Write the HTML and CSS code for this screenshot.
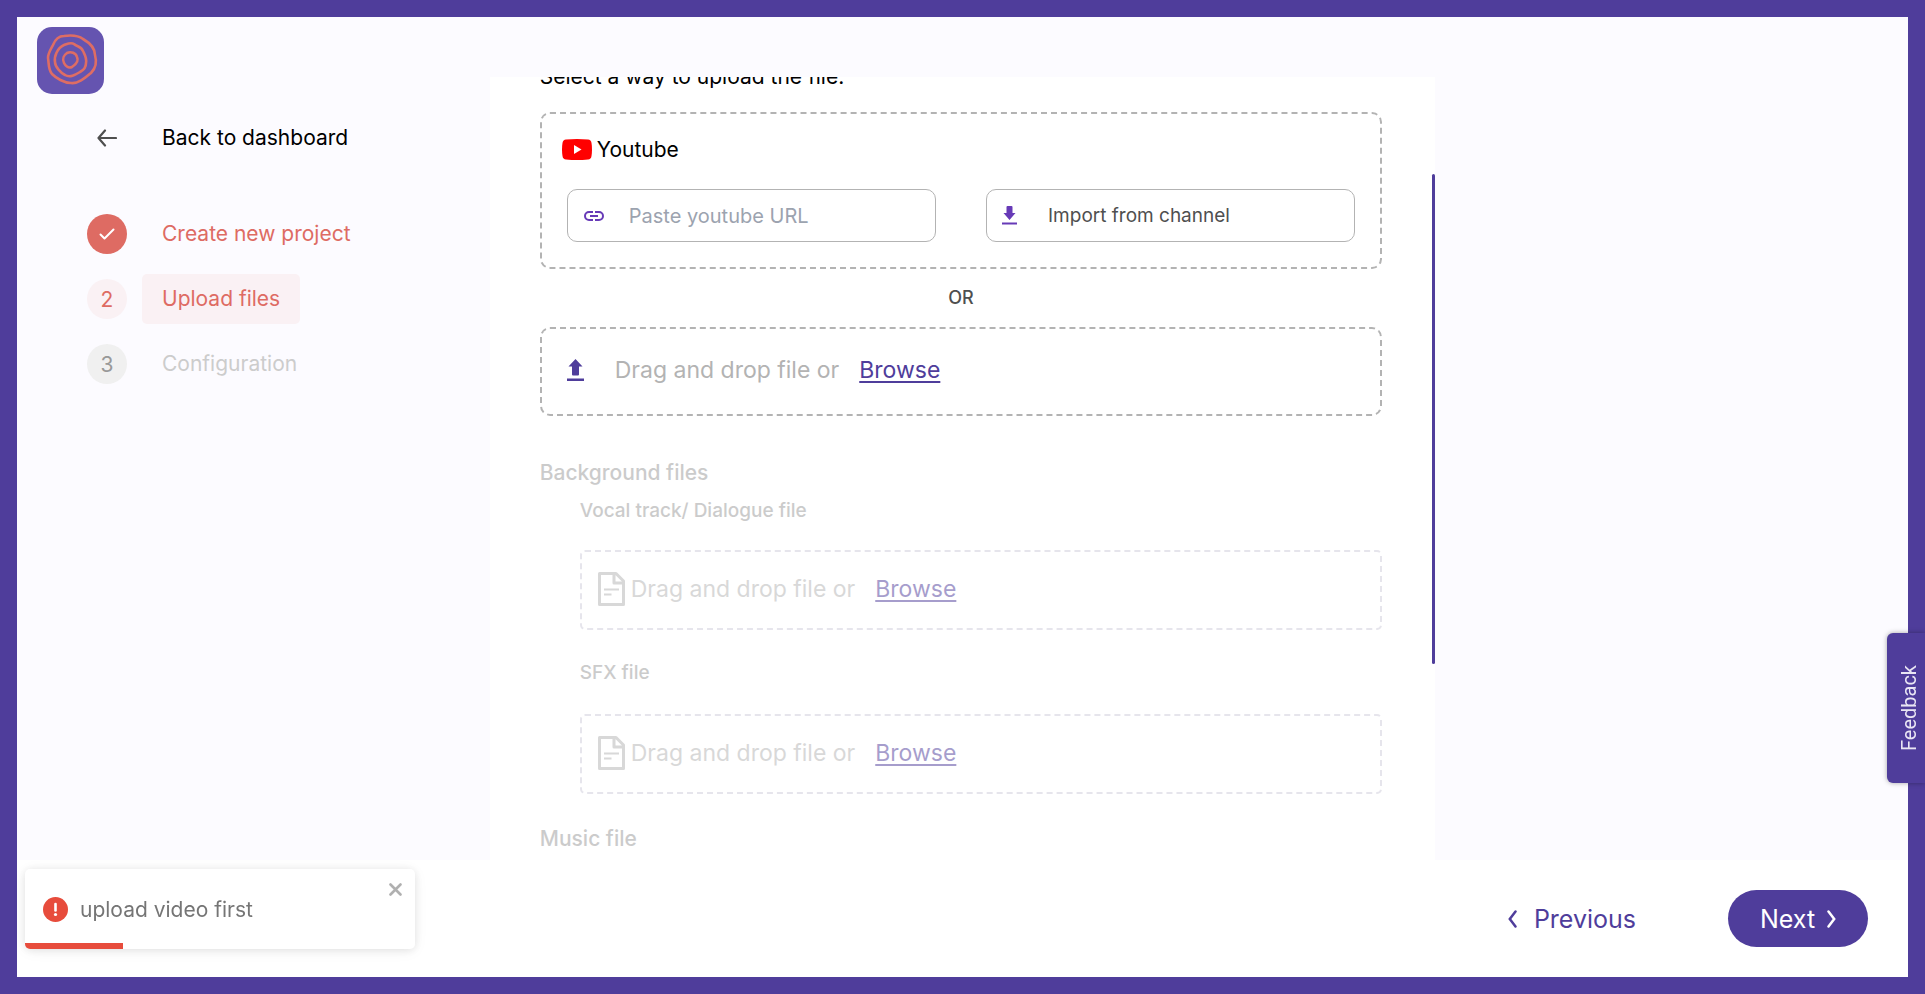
FILE: index.html
```html
<!DOCTYPE html>
<html lang="en">
<head>
<meta charset="utf-8">
<title>Upload files</title>
<link rel="stylesheet" href="styles.css">
</head>
<body>
<svg class="sprite" aria-hidden="true">
  <symbol id="file" viewBox="0 0 27 34">
    <path d="M1.5 1.5H18L25.500 9V32.500H1.500Z M16 2V11H25" fill="none" stroke="currentColor" stroke-width="3" stroke-linejoin="round"/>
    <path d="M6 17.500H21M6 22.500H13.500" fill="none" stroke="currentColor" stroke-width="2"/>
  </symbol>
</svg>
<div class="app">
  <div class="main">
    <aside class="sidebar">
      <a class="logo" href="#" aria-label="Home">
        <svg viewBox="0 0 67 67" fill="none" stroke="#de6d64" stroke-width="2.600" stroke-linejoin="round">
          <path d="M27 9C34 8 42 9 46 12C53 16 58 22 58 28C60 35 59 41 54 46C48 51 41 57 34 56C27 56 19 51 15 47C11 42 12 36 11 31C11 26 14 22 16 18C18 13 22 9 27 9Z"/>
          <path d="M27 18C30 17 34 15 37 17C40 20 44 19 46 24C48 28 50 31 49 36C49 41 47 43 43 45C38 48 33 51 28 48C24 46 18 40 18 35C17 30 20 21 27 18Z"/>
          <path d="M30 26C34 24 39 26 40 30C42 34 38 38 35 40C31 42 28 38 27 36C25 32 27 28 30 26Z"/>
        </svg>
      </a>
      <nav class="nav" aria-label="Project steps">
        <a class="row back" href="#">
          <span class="mark"><svg width="20" height="18" viewBox="0 0 20 18" fill="none" stroke="#4f4f4f" stroke-width="2.200" stroke-linecap="round" stroke-linejoin="round"><path d="M19 9H2M8 1.500L1.500 9L8 16.500"/></svg></span>
          <span class="label">Back to dashboard</span>
        </a>
        <ol class="steps">
          <li class="row done"><span class="mark"><svg width="16" height="12" viewBox="0 0 16 12" fill="none" stroke="#fff" stroke-width="2" stroke-linecap="round" stroke-linejoin="round"><path d="M1.500 6.500L5.500 10.500L14.500 1.500"/></svg></span><span class="label">Create new project</span></li>
          <li class="row current" aria-current="step"><span class="mark">2</span><span class="label">Upload files</span></li>
          <li class="row pending"><span class="mark">3</span><span class="label">Configuration</span></li>
        </ol>
      </nav>
    </aside>

    <main class="panel">
      <div class="content">
        <h2 class="intro">Select a way to upload the file.</h2>
        <section class="drop youtube">
          <div class="brand">
            <svg width="30" height="21" viewBox="0 0 30 21"><path d="M4 .500Q15-.500 26 .500Q29 .800 29.500 4Q30.500 10.500 29.500 17Q29 20.200 26 20.500Q15 21.500 4 20.500Q1 20.200 .500 17Q-.500 10.500 .500 4Q1 .800 4 .500Z" fill="red"/><path d="M12 6L19.500 10.500L12 15Z" fill="#fff"/></svg>
            <label for="url">Youtube</label>
          </div>
          <div class="sources">
            <div class="field">
              <svg width="22" height="12" viewBox="0 0 22 12" fill="none" stroke="#673ab7" stroke-width="2"><path d="M10 2H6A4 4 0 0 0 6 10H10M12 2H16A4 4 0 0 1 16 10H12M7 6H15"/></svg>
              <input id="url" type="url" placeholder="Paste youtube URL">
            </div>
            <button class="field import" type="button">
              <svg width="15" height="19" viewBox="0 0 15 19" fill="#673ab7"><path d="M5.500 0H9.500Q10.500 0 10.500 1V7H13.500L7.500 14L1.500 7H4.500V1Q4.500 0 5.500 0ZM0 16.500H15V18.500H0Z"/></svg>
              <span>Import from channel</span>
            </button>
          </div>
        </section>
        <p class="or">OR</p>
        <section class="drop upload">
          <svg width="17" height="22" viewBox="0 0 17 22" fill="#4f3d9b"><path d="M8.500 0L15.500 7.500H12V15.500Q12 16.500 11 16.500H6Q5 16.500 5 15.500V7.500H1.500ZM0 19.500H17V22H0Z"/></svg>
          <span>Drag and drop file or</span>
          <button class="browse" type="button">Browse</button>
        </section>

        <div class="extras">
          <h3 class="group">Background files</h3>
          <h4 class="track">Vocal track/ Dialogue file</h4>
          <section class="drop file">
            <svg width="27" height="34"><use href="#file"/></svg>
            <span>Drag and drop file or</span>
            <button class="browse" type="button">Browse</button>
          </section>
          <h4 class="track sfx">SFX file</h4>
          <section class="drop file">
            <svg width="27" height="34"><use href="#file"/></svg>
            <span>Drag and drop file or</span>
            <button class="browse" type="button">Browse</button>
          </section>
          <h3 class="group">Music file</h3>
        </div>
      </div>
      <div class="thumb"></div>
    </main>
  </div>

  <footer class="footer">
    <button class="prev" type="button"><svg width="9" height="18" viewBox="0 0 9 18" fill="none" stroke="currentColor" stroke-width="2.500" stroke-linecap="round"><path d="M7.500 1.500L1.800 9L7.500 16.500"/></svg>Previous</button>
    <button class="next" type="button">Next<svg width="9" height="18" viewBox="0 0 9 18" fill="none" stroke="currentColor" stroke-width="2.500" stroke-linecap="round"><path d="M1.500 1.500L7.200 9L1.500 16.500"/></svg></button>
  </footer>
</div>

<button class="feedback" type="button"><span>Feedback</span></button>

<div class="toast" role="alert">
  <svg class="alert" width="25" height="25" viewBox="0 0 25 25"><circle cx="12.500" cy="12.500" r="12.500" fill="#e74c3c"/><path d="M12.500 7V13.500" stroke="#fff" stroke-width="2.600" stroke-linecap="round"/><circle cx="12.500" cy="17.500" r="1.600" fill="#fff"/></svg>
  <span>upload video first</span>
  <button class="close" type="button" aria-label="Close"><svg width="13" height="13" viewBox="0 0 13 13" stroke="#b0b0b0" stroke-width="2.600" stroke-linecap="round"><path d="M1.500 1.500L11.500 11.500M11.500 1.500L1.500 11.500"/></svg></button>
  <div class="progress"></div>
</div>
</body>
</html>
```

FILE: styles.css
```css
* { box-sizing: border-box; }
body { margin: 0; background: #4f3d9b; font-family: Inter, "Open Sans", sans-serif; font-size: 21px; color: #000; }
button { margin: 0; padding: 0; border: 0; background: none; font: inherit; color: inherit; cursor: pointer; }
h2, h3, h4, p, ol { margin: 0; padding: 0; font-weight: 400; font-size: 21px; list-style: none; }
a { color: inherit; text-decoration: none; }
svg { display: block; flex: none; }
.sprite { position: absolute; width: 0; height: 0; }

.app { height: 100vh; padding: 17px; display: flex; flex-direction: column; }
.main { flex: 1; min-height: 0; display: grid; grid-template-columns: 1fr 2fr 1fr; background: #fcfbff; }

.sidebar { padding: 10px 20px 0; }
.logo { display: block; width: 67px; height: 67px; border-radius: 15px; background: #6554b0; }
.nav { padding: 19px 0 0 50px; }
.row { display: flex; align-items: center; gap: 15px; height: 50px; }
.mark { flex: none; width: 40px; height: 40px; border-radius: 50%; display: flex; align-items: center; justify-content: center; }
.label { height: 50px; line-height: 50px; padding: 0 20px; border-radius: 5px; white-space: nowrap; }
.steps { margin-top: 46px; display: grid; gap: 15px; }
.done { color: #de6b63; }
.done .mark { background: #de6b63; }
.current { color: #de6b63; }
.current .mark, .current .label { background: #faf1f4; }
.pending { color: #ccc; }
.pending .mark { background: #f0f0f0; color: #999; }

.panel { position: relative; margin-top: 60px; overflow: hidden; background: #fff; }
.content { margin-top: -15px; padding: 0 53px 0 50px; }
.intro { line-height: 30px; margin-bottom: 20px; }
.drop { border: 2px dashed #b3b3b3; border-radius: 10px; }
.youtube { padding: 20px 25px 25px; }
.brand { display: flex; align-items: center; gap: 5px; height: 30px; margin: 0 0 25px -5px; }
.sources { display: grid; grid-template-columns: minmax(0, 1fr) minmax(0, 1fr); gap: 50px; }
.field { display: flex; align-items: center; height: 53px; padding: 0 15px; border: 1px solid #b3b3b3; border-radius: 10px; }
.field input { flex: 1; min-width: 0; height: 48px; margin-left: 24px; padding: 0; border: 0; outline: 0; background: none; font: inherit; font-size: 20px; }
.field input::placeholder { color: #9ca3af; opacity: 1; }
.import { gap: 31px; font-size: 19px; color: #4f4f4f; }
.or { height: 58px; line-height: 58px; text-align: center; font-size: 18px; font-weight: 500; color: #4f4f4f; }
.upload, .file { display: flex; align-items: center; font-size: 23px; color: #b3b3b3; }
.upload { height: 89px; padding: 0 25px 3px; }
.upload span { margin-left: 31px; }
.browse { margin-left: 20px; color: #4f3d9b; text-decoration: underline; text-decoration-thickness: 2px; text-underline-offset: 3px; }
.extras { opacity: .5; padding-top: 37px; }
.group { line-height: 40px; color: #999; font-weight: 500; }
.track { margin-left: 40px; height: 57px; line-height: 36px; font-size: 19px; font-weight: 500; color: #999; }
.sfx { height: 59px; margin-top: 25px; }
.file { margin-left: 40px; height: 80px; padding: 0 16px 3px; border-color: #cfccdb; border-radius: 5px; }
.file span { margin-left: 6px; }
.file + .group { margin-top: 25px; }
.thumb { position: absolute; top: 97px; right: 0; width: 3px; height: 490px; border-radius: 2px; background: #4f3d9b; }

.footer { flex: none; height: 117px; padding: 0 40px; display: flex; align-items: center; justify-content: flex-end; gap: 92px; background: #fff; font-size: 25px; }
.prev { display: flex; align-items: center; gap: 17px; color: #4f3d9b; }
.next { display: flex; align-items: center; justify-content: center; gap: 12px; width: 140px; height: 57px; border-radius: 29px; background: #4f3d9b; color: #fff; }

.feedback { position: fixed; right: 0; top: 633px; width: 38px; height: 150px; padding-left: 6px; border-radius: 6px 0 0 6px; background: #4f3d9b; box-shadow: 0 0 5px rgba(0, 0, 0, .35); color: #e9e6f4; font: 20px Roboto, sans-serif; display: flex; align-items: center; justify-content: center; }
.feedback span { writing-mode: vertical-rl; transform: rotate(180deg); }

.toast { position: fixed; left: 25px; bottom: 45px; width: 390px; height: 80px; padding: 0 18px; display: flex; align-items: center; gap: 12px; overflow: hidden; border-radius: 5px; background: #fff; color: #757575; box-shadow: 0 1px 10px rgba(0, 0, 0, .1), 0 2px 15px rgba(0, 0, 0, .05); }
.close { position: absolute; top: 14px; right: 13px; }
.progress { position: absolute; left: 0; bottom: 0; width: 25%; height: 6px; background: #e74c3c; }
```
